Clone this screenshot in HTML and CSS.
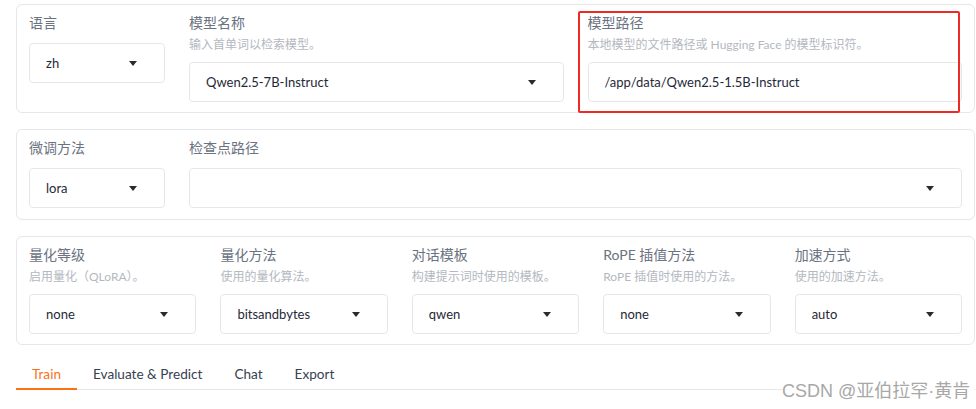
FILE: index.html
```html
<!DOCTYPE html>
<html>
<head>
  <meta charset="utf-8">
  <title>LLaMA Board</title>
  <link rel="stylesheet" href="styles.css">
</head>
<body>
  <div class="page">
    <div class="block">
      <div class="row">
        <div class="field fixed">
          <div class="label">语言</div>
          <div class="select"><span>zh</span><i class="arrow"></i></div>
        </div>
        <div class="field">
          <div class="label">模型名称</div>
          <div class="hint">输入首单词以检索模型。</div>
          <div class="select"><span>Qwen2.5-7B-Instruct</span><i class="arrow"></i></div>
        </div>
        <div class="field">
          <div class="label">模型路径</div>
          <div class="hint">本地模型的文件路径或 Hugging Face 的模型标识符。</div>
          <div class="input">/app/data/Qwen2.5-1.5B-Instruct</div>
        </div>
      </div>
      <div class="mark"></div>
    </div>

    <div class="block">
      <div class="row">
        <div class="field fixed">
          <div class="label">微调方法</div>
          <div class="select"><span>lora</span><i class="arrow"></i></div>
        </div>
        <div class="field">
          <div class="label">检查点路径</div>
          <div class="select"><span></span><i class="arrow"></i></div>
        </div>
      </div>
    </div>

    <div class="block">
      <div class="row">
        <div class="field">
          <div class="label">量化等级</div>
          <div class="hint">启用量化（QLoRA）。</div>
          <div class="select"><span>none</span><i class="arrow"></i></div>
        </div>
        <div class="field">
          <div class="label">量化方法</div>
          <div class="hint">使用的量化算法。</div>
          <div class="select"><span>bitsandbytes</span><i class="arrow"></i></div>
        </div>
        <div class="field">
          <div class="label">对话模板</div>
          <div class="hint">构建提示词时使用的模板。</div>
          <div class="select"><span>qwen</span><i class="arrow"></i></div>
        </div>
        <div class="field">
          <div class="label">RoPE 插值方法</div>
          <div class="hint">RoPE 插值时使用的方法。</div>
          <div class="select"><span>none</span><i class="arrow"></i></div>
        </div>
        <div class="field">
          <div class="label">加速方式</div>
          <div class="hint">使用的加速方法。</div>
          <div class="select"><span>auto</span><i class="arrow"></i></div>
        </div>
      </div>
    </div>

    <div class="tabs">
      <button class="tab active">Train</button>
      <button class="tab">Evaluate &amp; Predict</button>
      <button class="tab">Chat</button>
      <button class="tab">Export</button>
    </div>
  </div>

  <div class="watermark">CSDN @亚伯拉罕·黄肯</div>
</body>
</html>
```

FILE: styles.css
```css
body {
  margin: 0;
  background-color: white;
  font-family: Lato, "Noto Sans CJK SC", sans-serif;
  color: #1f2937;
  overflow: hidden;
}

.page {
  padding: 4px 1px 0 16px;
}

.block {
  position: relative;
  border: 1px solid #e5e7eb;
  border-radius: 6px;
  padding: 8px 12px 10px 12px;
  margin-bottom: 16px;
}

.block:nth-child(2) {
  padding-bottom: 11px;
}

.row {
  display: flex;
  gap: 24px;
  align-items: flex-start;
}

.field {
  flex: 1;
  min-width: 0;
}

.field.fixed {
  flex: 0 0 136px;
}

.label {
  font-size: 14px;
  line-height: 20px;
  color: #6b7280;
  margin-bottom: 10px;
}

.label + .hint {
  margin-top: -7px;
}

.hint {
  font-size: 12px;
  line-height: 18px;
  color: #b4b8bf;
  margin-bottom: 8px;
}

.select,
.input {
  height: 40px;
  box-sizing: border-box;
  border: 1px solid #e5e7eb;
  border-radius: 4px;
  padding: 0 16px;
  display: flex;
  align-items: center;
  font-size: 13px;
  color: #1f2937;
}

.select span {
  flex: 1;
}

.arrow {
  width: 0;
  height: 0;
  border-left: 4px solid transparent;
  border-right: 4px solid transparent;
  border-top: 5px solid #2b2b2b;
  margin-right: 11px;
}

.mark {
  position: absolute;
  left: 561px;
  top: 6px;
  width: 378px;
  height: 98px;
  border: 2px solid #ee2a24;
  border-radius: 2px;
}

.tabs {
  display: flex;
  border-bottom: 1px solid #e5e7eb;
  margin-top: 16px;
}

.tab {
  background: none;
  border: none;
  border-bottom: 2px solid transparent;
  margin-bottom: -1px;
  padding: 3px 16px 4px 16px;
  font-family: Lato, "Noto Sans CJK SC", sans-serif;
  font-size: 13.6px;
  line-height: 20px;
  color: #374151;
}

.tab.active {
  color: #f97316;
  border-bottom-color: #f97316;
}

.watermark {
  position: absolute;
  left: 782px;
  top: 380px;
  padding-right: 4px;
  background-color: rgba(255, 255, 255, 0.85);
  font-family: "Liberation Sans", "Noto Sans CJK SC", sans-serif;
  font-size: 18px;
  line-height: 22px;
  color: #a8a8a8;
}
```
